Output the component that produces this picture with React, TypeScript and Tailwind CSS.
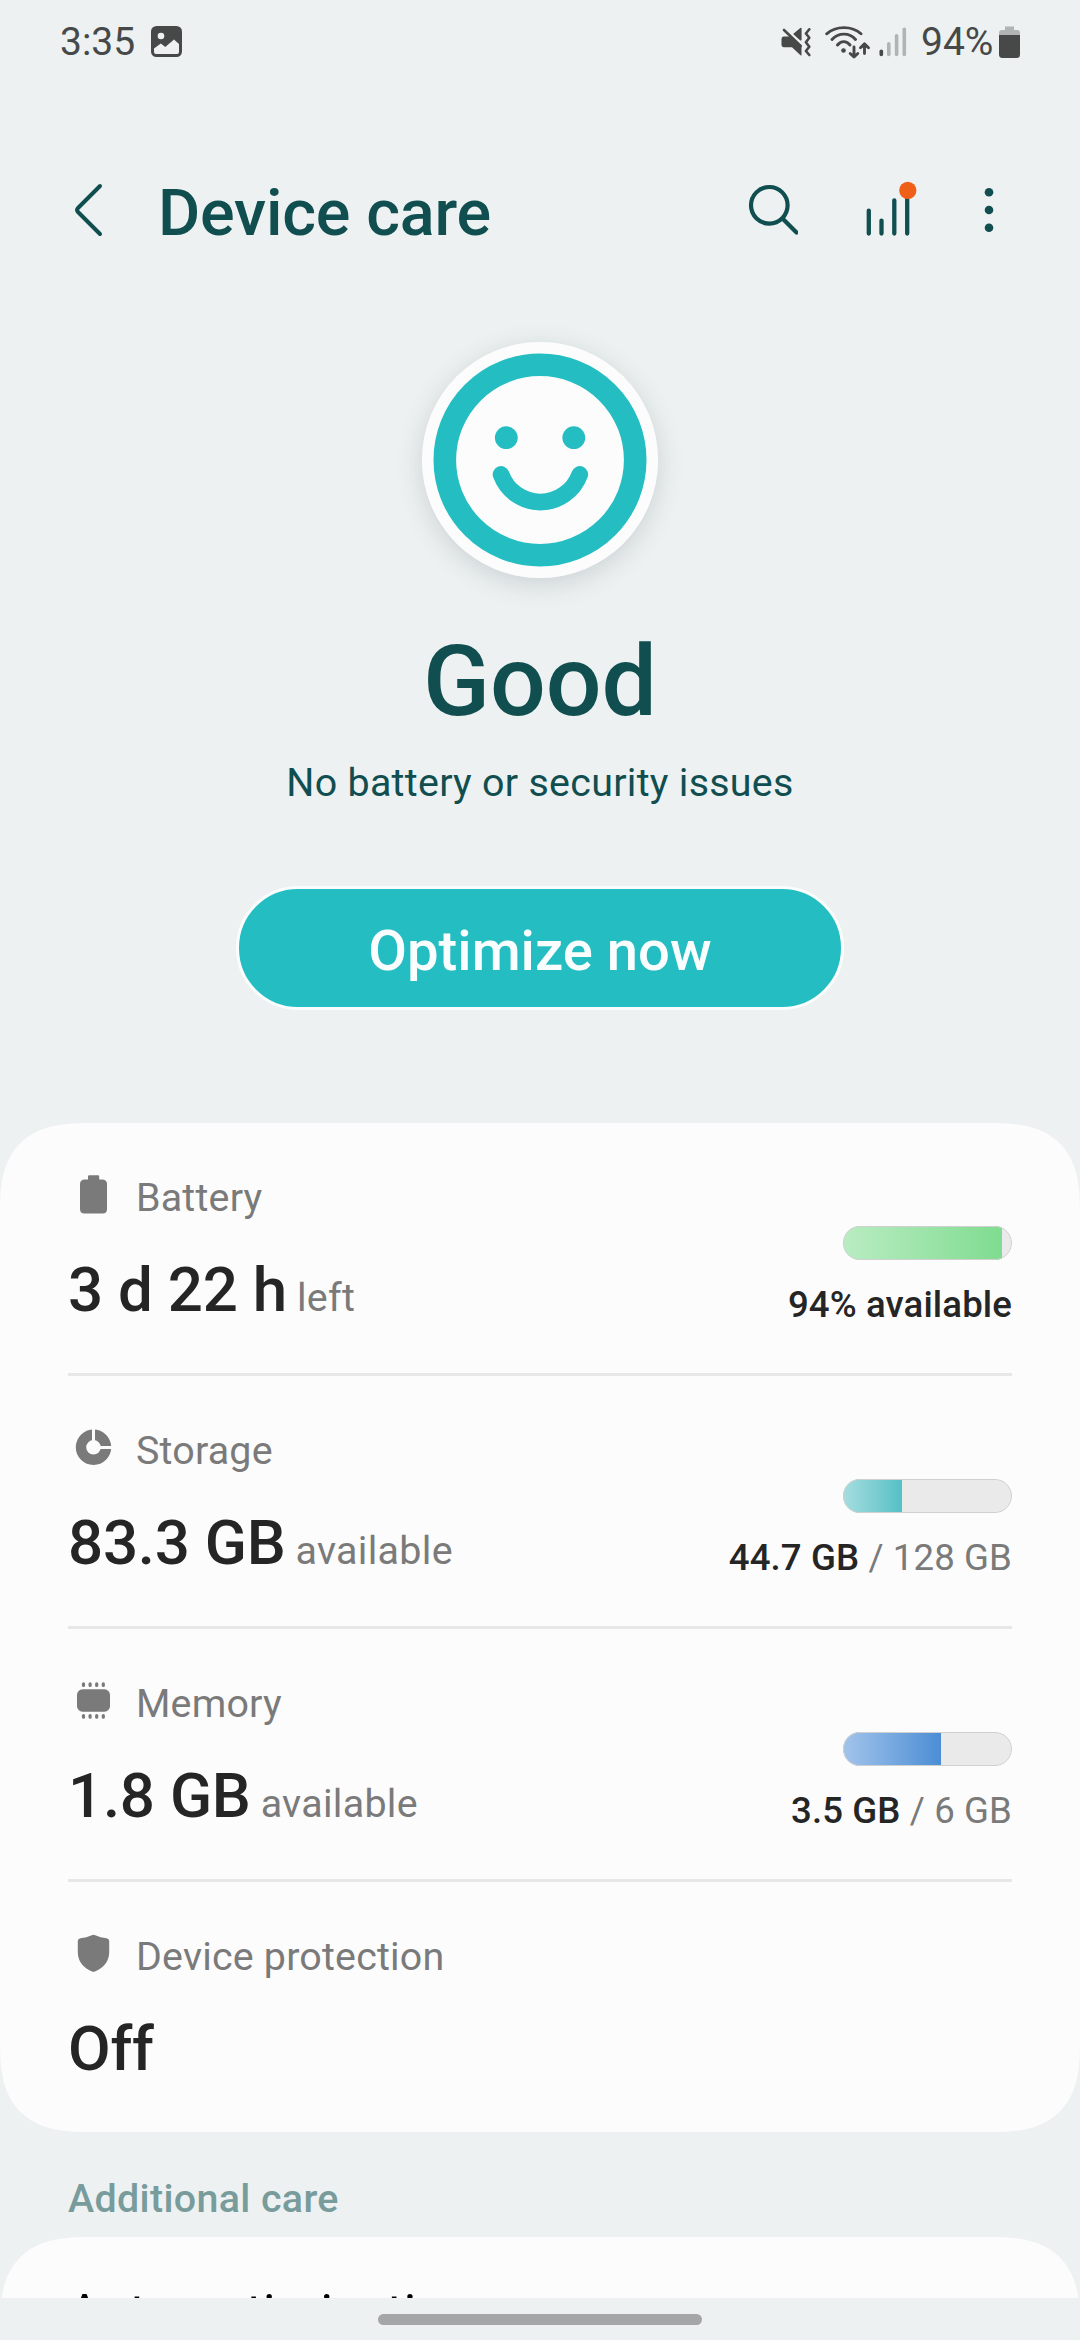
import type { ReactNode } from "react";

function StatusBar() {
  return (
    <div className="flex h-[83px] shrink-0 items-center justify-between pr-[60px] pl-[60px] text-[#474948]">
      <div className="flex items-center">
        <span className="w-[91px] text-[39px] leading-[46px]">3:35</span>
        <svg width="31" height="31" viewBox="0 0 31 31" fill="none">
          <rect width="31" height="31" rx="5.5" fill="currentColor" />
          <circle cx="10" cy="10" r="3.3" fill="#edf1f2" />
          <path d="M3 22.5 9.8 17.5 14.3 21 23 13.5 28 18V26Q28 28 26 28H5Q3 28 3 26Z" fill="#edf1f2" />
        </svg>
      </div>
      <div className="flex items-center">
        <svg width="30" height="30" viewBox="0 0 30 30" fill="currentColor">
          <path d="M2.500 9.500H9L20.500 20V28Q20.500 29 19.500 28.300L11 20.300H3Q0.500 20.300 0.500 17.500V12Q0.500 9.500 2.500 9.500Z" />
          <path d="M19.800 1.500V12.800L13.200 7Z" stroke="currentColor" strokeWidth="1.600" strokeLinejoin="round" />
          <path d="M3 3 19.700 19" stroke="currentColor" strokeWidth="2.600" strokeLinecap="round" />
          <path d="M28.300 2.300 24.900 6.500 28.300 10.700 24.900 15.200 28.300 19.700 24.900 24 28.300 28" fill="none" stroke="currentColor" strokeWidth="2.600" strokeLinecap="round" strokeLinejoin="round" />
        </svg>
        <svg className="ml-3.5" width="46" height="34" viewBox="0 0 46 34" fill="none" stroke="currentColor" strokeWidth="2.900" strokeLinecap="round" strokeLinejoin="round">
          <path d="M1.700 8.800C11 0.500 27 0.500 36 8.800M7 14.500C13.500 7.300 24.500 7.300 30.500 14.500M12.500 20C16 15.500 21.500 15.500 25 20" />
          <circle cx="18.500" cy="25.500" r="2.300" fill="currentColor" stroke="none" />
          <path d="M29 22V31.500M25.200 28.500 29 32 32.800 28.500M39.500 28.500V19.500M35.500 22.700 39.500 18.900 43.500 22.700" />
        </svg>
        <svg className="ml-2" width="28" height="30" viewBox="0 0 28 30" fill="#b1b4b4">
          <rect x="0.500" y="22.500" width="3.600" height="6.800" rx="1.800" fill="#474948" />
          <rect x="8" y="15" width="3.600" height="14.300" rx="1.800" />
          <rect x="15.800" y="7" width="3.600" height="22.300" rx="1.800" />
          <rect x="23.500" y="0.500" width="3.600" height="28.800" rx="1.800" />
        </svg>
        <span className="ml-3.5 w-[78px] text-[39px] leading-[46px]">94%</span>
        <svg width="21" height="32" viewBox="0 0 21 32">
          <path d="M6 0.500H15V4H18Q21 4 21 7V10H0V7Q0 4 3 4H6Z" fill="#b1b4b4" />
          <path d="M0 9H21V28.500Q21 32 17.500 32H3.500Q0 32 0 28.500Z" fill="currentColor" />
        </svg>
      </div>
    </div>
  );
}

function Header() {
  return (
    <header className="flex h-[254px] shrink-0 items-center pr-[86px] pl-[74px] text-[#104e50]">
      <svg width="30" height="56" viewBox="0 0 30 56" fill="none" stroke="currentColor" strokeWidth="4" strokeLinecap="round" strokeLinejoin="round">
        <path d="M26 4 4 26Q2 28 4 30L26 52" />
      </svg>
      <h1 className="ml-[54px] grow pt-[6px] text-[64.7px] leading-[76px] font-medium tracking-[-0.2px]">Device care</h1>
      <svg width="50" height="52" viewBox="0 0 50 52" fill="none" stroke="currentColor" strokeWidth="4.200" strokeLinecap="round">
        <circle cx="21.300" cy="21.300" r="18.300" />
        <path d="M35 35 48.500 48.500" />
      </svg>
      <svg className="ml-[68px]" width="52" height="58" viewBox="0 0 52 58" fill="none" stroke="currentColor" strokeWidth="4.300" strokeLinecap="round">
        <path d="M2.800 29.600V52.500M15.500 39.600V52.500M28.300 19.300V52.500M41.200 13V52.500" />
        <circle cx="41.800" cy="9.400" r="8.600" fill="#f05f18" stroke="none" />
      </svg>
      <svg className="ml-[66px]" width="10" height="46" viewBox="0 0 10 46" fill="currentColor">
        <circle cx="5" cy="5.300" r="4.300" />
        <circle cx="5" cy="23" r="4.300" />
        <circle cx="5" cy="40.700" r="4.300" />
      </svg>
    </header>
  );
}

function Hero() {
  return (
    <section className="flex h-[786px] shrink-0 flex-col items-center pt-[5px] text-[#104e50]">
      <div className="mr-[1px] size-[236px] rounded-full shadow-[0_6px_26px_rgba(40,60,60,0.17)]">
        <svg width="236" height="236" viewBox="0 0 236 236" fill="none" stroke="#23bdc2">
          <circle cx="118" cy="118" r="118" fill="#fcfcfc" stroke="none" />
          <circle cx="118" cy="118" r="95.200" strokeWidth="22.600" />
          <circle cx="84.300" cy="95.700" r="11.400" fill="#23bdc2" stroke="none" />
          <circle cx="151.800" cy="95.700" r="11.400" fill="#23bdc2" stroke="none" />
          <path d="M79.100 132.500A41.800 41.800 0 0 0 157.700 132.500" strokeWidth="16.800" strokeLinecap="round" />
        </svg>
      </div>
      <h2 className="mt-[46px] text-[98.4px] leading-[116px] font-medium">Good</h2>
      <p className="mt-[20px] text-[39.4px] leading-[46px] tracking-[0.28px]">No battery or security issues</p>
      <button className="mt-[80px] flex h-[124px] w-[608px] items-center justify-center rounded-full border-[3px] border-[#fafdfd] bg-[#23bdc2] pt-[6px] text-[56.2px] leading-[66px] font-medium text-[#fafdfd]">
        Optimize now
      </button>
    </section>
  );
}

interface CareRowProps {
  icon: ReactNode;
  label: string;
  value: string;
  unit?: string;
  last?: boolean;
  children?: ReactNode;
}

function CareRow({ icon, label, value, unit, last, children }: CareRowProps) {
  return (
    <div className={last ? "flex h-[250px] justify-between" : "flex h-[253px] justify-between border-b-[3px] border-[#e7e7e7]"}>
      <div>
        <div className="flex pt-[50px]">
          <div className="w-[68px] pl-[5px]">{icon}</div>
          <span className="pt-0.5 text-[39.4px] leading-[46px] tracking-[0.2px] text-[#7a7a7a]">{label}</span>
        </div>
        <div className="mt-[33px] flex items-baseline gap-[10px] leading-[72px]">
          <span className="text-[61.9px] font-medium tracking-[-0.25px] text-[#252525]">{value}</span>
          {unit && <span className="text-[39.4px] tracking-[0.3px] text-[#7a7a7a]">{unit}</span>}
        </div>
      </div>
      <div className="flex flex-col items-end pt-[103px]">{children}</div>
    </div>
  );
}

function Meter({ percent, fill }: { percent: number; fill: string }) {
  return (
    <div className="relative h-[34px] w-[169px] overflow-hidden rounded-full bg-[#eaeaea]">
      <div className={"h-full " + fill} style={{ width: `${percent}%` }} />
      <div className="absolute inset-0 rounded-full border border-[#cfd0d0]" />
    </div>
  );
}

function MeterText({ strong, rest }: { strong: string; rest?: string }) {
  return (
    <div className="mt-[23px] text-[36.6px] leading-[44px] tracking-[0.12px] whitespace-pre text-[#7a7a7a]">
      <span className="font-medium text-[#252525]">{strong}</span>
      {rest}
    </div>
  );
}

function BatteryIcon() {
  return (
    <svg width="40" height="42" viewBox="0 0 40 42" fill="#7a7a7a">
      <path d="M15 3.500Q15 2.300 16.200 2.300H25Q26.200 2.300 26.200 3.500V6.500H29Q34 6.500 34 11V36Q34 40.500 29.500 40.500H11.500Q7 40.500 7 36V11Q7 6.500 12 6.500H15Z" />
    </svg>
  );
}

function StorageIcon() {
  return (
    <svg width="40" height="42" viewBox="0 0 40 42" fill="none">
      <circle cx="20.500" cy="21.300" r="12.500" stroke="#7a7a7a" strokeWidth="10.400" />
      <path d="M20.500 2V16M24 21.500H39.500" stroke="#fcfcfc" strokeWidth="3" />
    </svg>
  );
}

function MemoryIcon() {
  return (
    <svg width="40" height="42" viewBox="0 0 40 42" fill="#7a7a7a">
      <rect x="4" y="10.300" width="33" height="22.400" rx="5.500" />
      <path d="M10.500 4.800V6.500M17.100 4.800V6.500M23.700 4.800V6.500M30.300 4.800V6.500M10.500 36.500V38.200M17.100 36.500V38.200M23.700 36.500V38.200M30.300 36.500V38.200" stroke="#7a7a7a" strokeWidth="3.200" strokeLinecap="round" />
    </svg>
  );
}

function ShieldIcon() {
  return (
    <svg width="40" height="42" viewBox="0 0 40 42" fill="#7a7a7a">
      <path d="M18.800 3.200Q20.500 2.300 22.200 3.200Q27.500 5.500 33.500 6.300Q36.200 6.800 36.200 9.500V20C36.200 29.500 30.500 36 22 39.500Q20.500 40.200 19 39.500C10.500 36 4.800 29.500 4.800 20V9.500Q4.800 6.800 7.500 6.300Q13.500 5.500 18.800 3.200Z" />
    </svg>
  );
}

export default function App() {
  return (
    <div className="flex h-[2340px] w-[1080px] flex-col overflow-hidden bg-[#edf1f2] font-['Roboto',sans-serif]">
      <StatusBar />
      <Header />
      <Hero />
      <main className="h-[1009px] shrink-0 rounded-[76px] bg-[#fcfcfc] px-[68px] supports-[corner-shape:round]:rounded-[90px] [corner-shape:superellipse(1.44)]">
        <CareRow icon={<BatteryIcon />} label="Battery" value="3 d 22 h" unit="left">
          <Meter percent={94} fill="bg-linear-to-r from-[#b9ecc2] to-[#7fdc90]" />
          <MeterText strong="94% available" />
        </CareRow>
        <CareRow icon={<StorageIcon />} label="Storage" value="83.3 GB" unit="available">
          <Meter percent={34.9} fill="bg-linear-to-r from-[#a5dde0] to-[#52c1c5]" />
          <MeterText strong="44.7 GB" rest=" / 128 GB" />
        </CareRow>
        <CareRow icon={<MemoryIcon />} label="Memory" value="1.8 GB" unit="available">
          <Meter percent={58} fill="bg-linear-to-r from-[#a2c4ea] to-[#4b8dd5]" />
          <MeterText strong="3.5 GB" rest=" / 6 GB" />
        </CareRow>
        <CareRow icon={<ShieldIcon />} label="Device protection" value="Off" last />
      </main>
      <h3 className="h-[105px] shrink-0 px-[68px] pt-[44px] text-[39.4px] leading-[46px] font-medium tracking-[0.35px] text-[#789b9b]">Additional care</h3>
      <div className="h-[61px] shrink-0 overflow-hidden">
        <div className="h-[200px] rounded-[78px] bg-[#fcfcfc] px-[68px] pt-[46px] text-[50.6px] leading-[59px] tracking-[0.4px] text-black supports-[corner-shape:round]:rounded-[90px] [corner-shape:superellipse(1.44)]">
          Auto optimization
        </div>
      </div>
      <div className="flex h-[42px] shrink-0 justify-center pt-4">
        <div className="h-[11px] w-[324px] rounded-full bg-[#a5a6a8]" />
      </div>
    </div>
  );
}
